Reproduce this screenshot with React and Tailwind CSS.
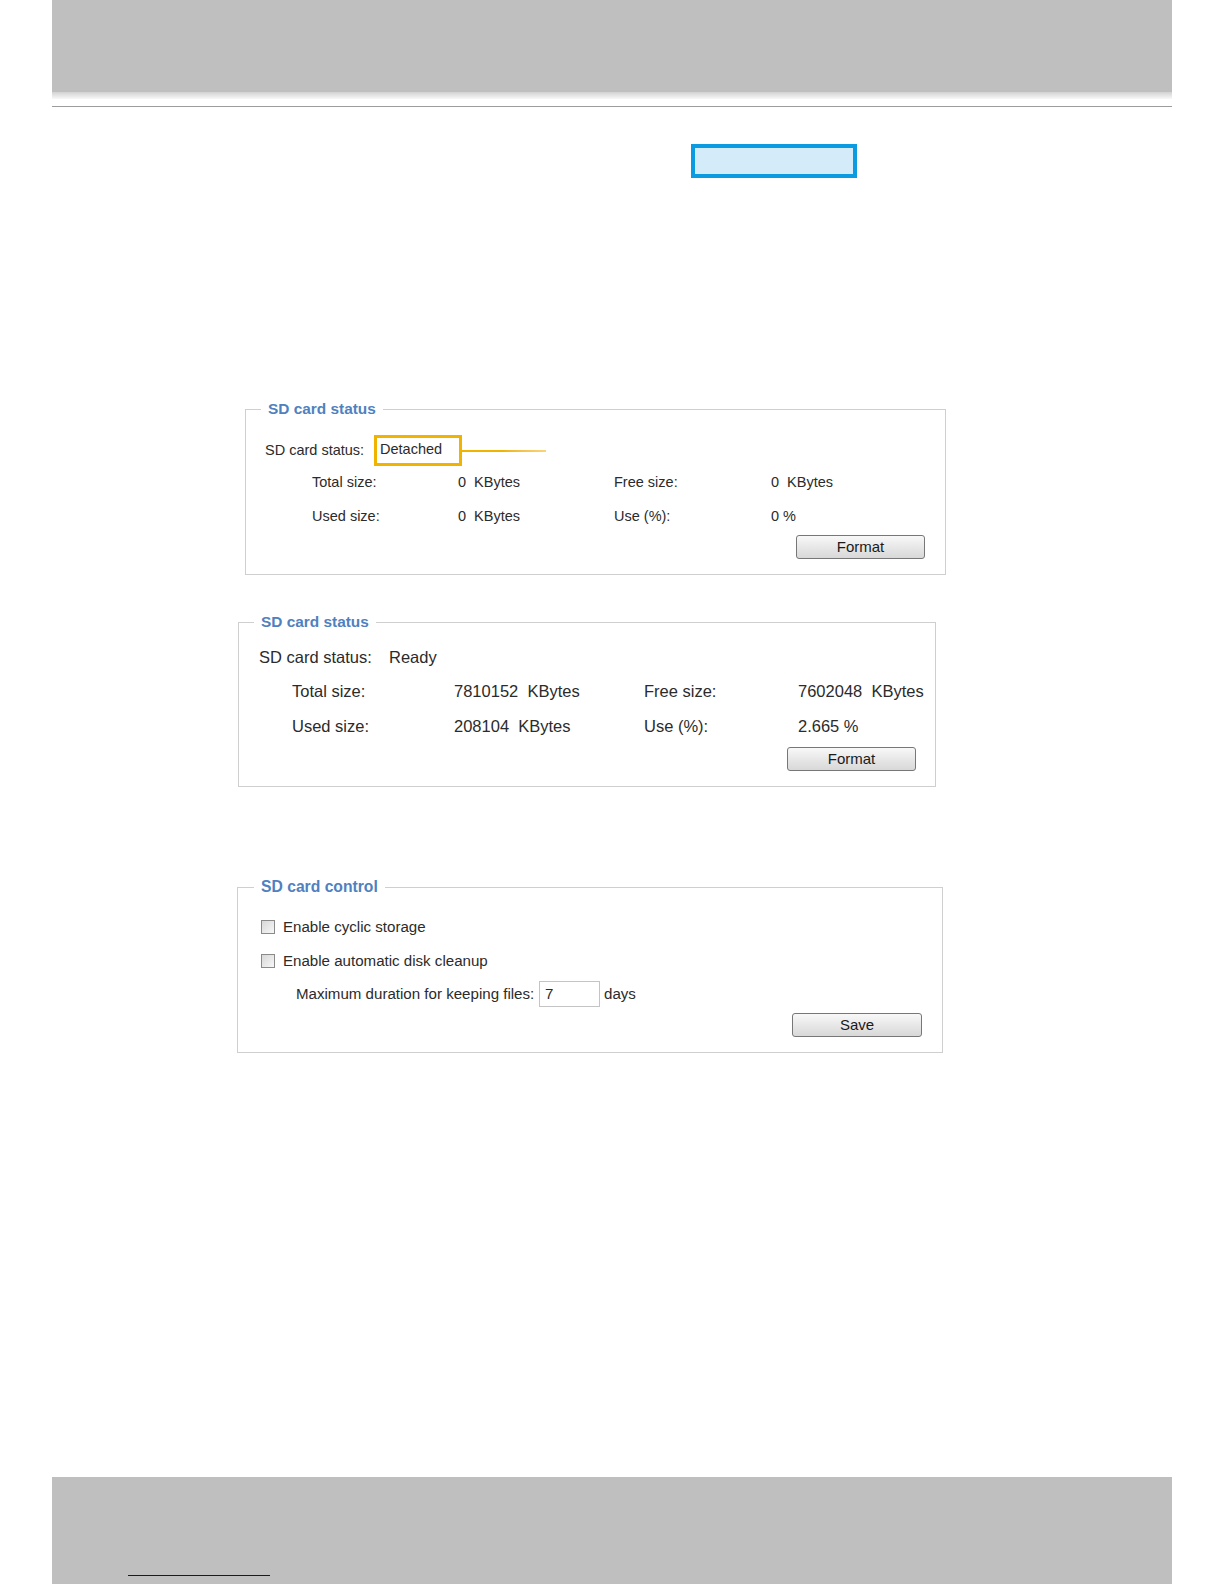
const font = { fontFamily: '"Liberation Sans", Arial, sans-serif' };

const Legend = ({ children, ml = "ml-[15px]", size = "text-[15.4px]" }) => (
  <legend className={`${ml} px-[7px] h-[22px] leading-[22px] ${size} font-bold whitespace-nowrap text-[#4f81c0]`}>
    {children}
  </legend>
);

const Btn = ({ children, w = "w-[129px]" }) => (
  <button
    type="button"
    className={`${w} h-[24px] rounded-[3px] border border-[#777] bg-gradient-to-b from-[#f8f8f8] to-[#d8d8d8] text-[15px] text-[#1a1a1a] leading-[22px]`}
  >
    {children}
  </button>
);

const Check = () => (
  <span className="inline-block w-[14px] h-[14px] border border-[#8a8a8a] bg-gradient-to-br from-[#d8d8d8] to-[#f7f7f7] shrink-0" />
);

export default function App() {
  return (
    <div className="w-[1224px] h-[1584px] overflow-hidden bg-white flex flex-col text-[#2b2b2b]" style={font}>
      {/* header band */}
      <div className="ml-[52px] w-[1120px] h-[92px] shrink-0 bg-[#bfbfbf]" />
      <div className="ml-[52px] w-[1120px] h-[7px] shrink-0 bg-gradient-to-b from-[#d2d2d2] to-[#f8f8f8]" />
      <div className="ml-[52px] w-[1120px] h-[1px] shrink-0 mt-[7px] bg-[#9c9c9c]" />

      {/* highlighted menu spot */}
      <div className="ml-[691px] mt-[37px] w-[166px] h-[34px] shrink-0 border-4 border-[#0b9be0] bg-[#d4ecf9]" />

      {/* SD card status - detached */}
      <fieldset className="ml-[245px] mt-[220px] w-[701px] min-w-0 shrink-0 border border-[#cfcfcf] p-0 m-0">
        <Legend>SD card status</Legend>
        <div className="pl-[19px] pr-[20px] pb-[15px] text-[14.5px] whitespace-nowrap">
          <div className="mt-[15px] flex items-center h-[31px]">
            <span className="w-[109px]">SD card status:</span>
            <span className="w-[88px] h-[31px] border-[3px] border-[#f0b400] pl-[3px] leading-[23px] pb-[2px]">
              Detached
            </span>
            <span className="w-[84px] h-[2px] bg-gradient-to-r from-[#f0b400] via-[#f0b400] to-[#f7d677]" />
          </div>
          <div className="mt-[6px] grid grid-cols-[146px_156px_157px_1fr] pl-[47px] h-[20px] leading-[20px]">
            <span>Total size:</span>
            <span>0&nbsp;&nbsp;KBytes</span>
            <span>Free size:</span>
            <span>0&nbsp;&nbsp;KBytes</span>
          </div>
          <div className="mt-[14px] grid grid-cols-[146px_156px_157px_1fr] pl-[47px] h-[20px] leading-[20px]">
            <span>Used size:</span>
            <span>0&nbsp;&nbsp;KBytes</span>
            <span>Use (%):</span>
            <span>0 %</span>
          </div>
          <div className="mt-[9px] flex justify-end">
            <Btn>Format</Btn>
          </div>
        </div>
      </fieldset>

      {/* SD card status - ready */}
      <fieldset className="ml-[238px] mt-[36px] w-[698px] min-w-0 shrink-0 border border-[#cfcfcf] p-0 m-0">
        <Legend>SD card status</Legend>
        <div className="pl-[20px] pr-[19px] pb-[15px] text-[16.5px] whitespace-nowrap">
          <div className="mt-[13px] flex h-[22px] leading-[22px]">
            <span className="w-[130px]">SD card status:</span>
            <span>Ready</span>
          </div>
          <div className="mt-[12px] grid grid-cols-[162px_190px_154px_110px] pl-[33px] h-[22px] leading-[22px]">
            <span>Total size:</span>
            <span>7810152&nbsp;&nbsp;KBytes</span>
            <span>Free size:</span>
            <span>7602048&nbsp;&nbsp;KBytes</span>
          </div>
          <div className="mt-[13px] grid grid-cols-[162px_190px_154px_110px] pl-[33px] h-[22px] leading-[22px]">
            <span>Used size:</span>
            <span>208104&nbsp;&nbsp;KBytes</span>
            <span>Use (%):</span>
            <span>2.665 %</span>
          </div>
          <div className="mt-[10px] flex justify-end">
            <Btn>Format</Btn>
          </div>
        </div>
      </fieldset>

      {/* SD card control */}
      <fieldset className="ml-[237px] mt-[89px] w-[706px] min-w-0 shrink-0 border border-[#cfcfcf] p-0 m-0">
        <Legend ml="ml-[16px]" size="text-[15.7px]">SD card control</Legend>
        <div className="pl-[23px] pr-[20px] pb-[15px] text-[15.1px] whitespace-nowrap">
          <div className="mt-[19px] flex items-center gap-[8px] h-[20px]">
            <Check />
            <span>Enable cyclic storage</span>
          </div>
          <div className="mt-[14px] flex items-center gap-[8px] h-[20px]">
            <Check />
            <span>Enable automatic disk cleanup</span>
          </div>
          <div className="mt-[10px] flex items-center h-[26px] pl-[35px]">
            <span className="w-[243px]">Maximum duration for keeping files:</span>
            <span className="w-[61px] h-[26px] border border-[#c4c4c4] pl-[5px] leading-[24px]">7</span>
            <span className="ml-[4px]">days</span>
          </div>
          <div className="mt-[6px] flex justify-end">
            <Btn w="w-[130px]">Save</Btn>
          </div>
        </div>
      </fieldset>

      {/* footer band */}
      <div className="mt-auto ml-[52px] w-[1120px] h-[107px] shrink-0 bg-[#bfbfbf] flex flex-col">
        <div className="ml-[76px] mt-[98px] w-[142px] h-[1px] bg-[#0000ee]" />
      </div>
    </div>
  );
}
